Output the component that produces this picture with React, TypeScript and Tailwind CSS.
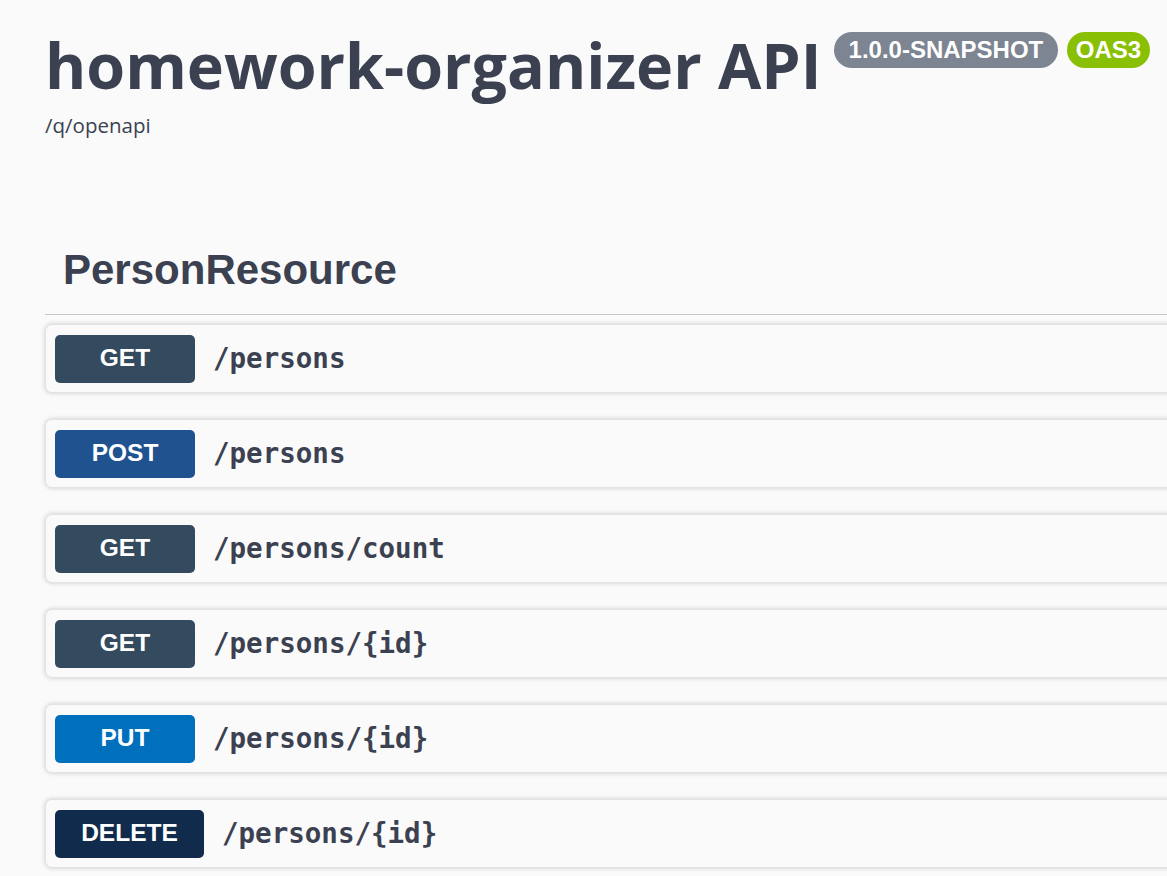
import React from "react";

const ops = [
  { m: "GET", p: "/persons", c: "bg-[#344a5e]", w: "w-[140px]" },
  { m: "POST", p: "/persons", c: "bg-[#20528f]", w: "w-[140px]" },
  { m: "GET", p: "/persons/count", c: "bg-[#344a5e]", w: "w-[140px]" },
  { m: "GET", p: "/persons/{id}", c: "bg-[#344a5e]", w: "w-[140px]" },
  { m: "PUT", p: "/persons/{id}", c: "bg-[#0070bc]", w: "w-[140px]" },
  { m: "DELETE", p: "/persons/{id}", c: "bg-[#112b4d]", w: "w-[149px]" },
];

export default function App() {
  return (
    <div className="min-h-screen w-full overflow-hidden bg-[#fafafa] text-[#3b4151]">
      <div className="pl-[45px]">
        <div className="flex items-start pt-[22px]">
          <h2
            className="text-[62.8px] font-bold leading-[86px] text-[#3b4151]"
            style={{ fontFamily: '"Open Sans", sans-serif' }}
          >
            homework-organizer API
          </h2>
          <div
            className="ml-[12px] mt-[10px] flex gap-[9px] text-[24px] font-bold text-white"
            style={{ fontFamily: '"Liberation Sans", Arial, sans-serif' }}
          >
            <span className="flex h-[36px] items-center rounded-full bg-[#7d8492] px-[15px]">
              1.0.0-SNAPSHOT
            </span>
            <span className="flex h-[36px] items-center rounded-full bg-[#89bf04] px-[8.5px]">
              OAS3
            </span>
          </div>
        </div>
        <div
          className="mt-[3px] text-[20.5px] leading-[28px]"
          style={{ fontFamily: '"Open Sans", sans-serif' }}
        >
          /q/openapi
        </div>

        <div className="mr-[-30px] mt-[107px]">
          <div className="border-b border-[#c4c6cb] pb-[20px] pl-[18px]">
            <h3
              className="text-[42px] font-bold leading-[48px] text-[#3b4151]"
              style={{ fontFamily: '"Liberation Sans", Arial, sans-serif' }}
            >
              PersonResource
            </h3>
          </div>
          <div className="mt-[9px] flex flex-col gap-[26px]">
            {ops.map((o, i) => (
              <div
                key={i}
                className="flex h-[69px] items-center rounded-[7px] border border-[#e3e3e3] bg-[#fafafa] px-[9px] shadow-[0_0_5px_rgba(0,0,0,0.19)]"
              >
                <span
                  className={`${o.c} ${o.w} flex h-[48px] items-center justify-center rounded-[5px] text-[24.5px] font-bold text-white`}
                  style={{ fontFamily: '"Liberation Sans", Arial, sans-serif' }}
                >
                  {o.m}
                </span>
                <span
                  className="ml-[18px] text-[27.5px] font-bold text-[#3b4151]"
                  style={{ fontFamily: '"DejaVu Sans Mono", monospace' }}
                >
                  {o.p}
                </span>
              </div>
            ))}
          </div>
        </div>
      </div>
    </div>
  );
}
